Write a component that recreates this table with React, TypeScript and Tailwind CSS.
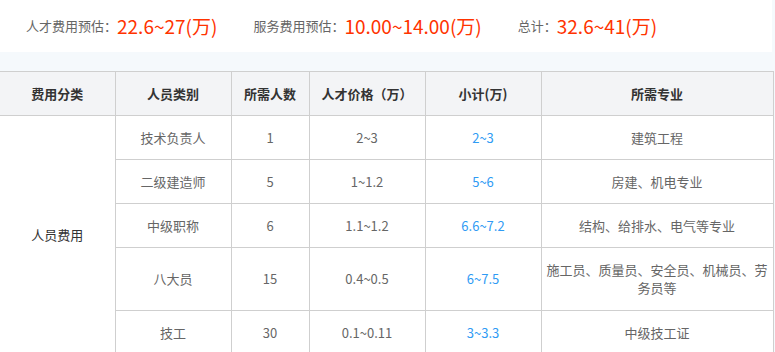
import React from "react";

const font = { fontFamily: '"Noto Sans CJK SC", "Noto Sans", sans-serif' };

type Row = { type: string; n: string; price: string; sub: string; major: string; tall?: boolean };

const rows: Row[] = [
  { type: "技术负责人", n: "1", price: "2~3", sub: "2~3", major: "建筑工程" },
  { type: "二级建造师", n: "5", price: "1~1.2", sub: "5~6", major: "房建、机电专业" },
  { type: "中级职称", n: "6", price: "1.1~1.2", sub: "6.6~7.2", major: "结构、给排水、电气等专业" },
  { type: "八大员", n: "15", price: "0.4~0.5", sub: "6~7.5", major: "施工员、质量员、安全员、机械员、劳务员等", tall: true },
  { type: "技工", n: "30", price: "0.1~0.11", sub: "3~3.3", major: "中级技工证" },
];

export default function App() {
  return (
    <div className="min-h-[352px] w-[775px] bg-[#f5f9fc] overflow-hidden" style={font}>
      <div className="flex h-[52px] w-[772px] items-center bg-white pl-[26px] text-[13px] text-[#666]">
        <div className="flex items-center">
          <span>人才费用预估：</span>
          <span className="text-[19px] text-[#ff3300]">22.6~27(万)</span>
        </div>
        <div className="ml-[36px] flex items-center">
          <span>服务费用预估：</span>
          <span className="text-[19px] text-[#ff3300]">10.00~14.00(万)</span>
        </div>
        <div className="ml-[36px] flex items-center">
          <span>总计：</span>
          <span className="text-[19px] text-[#ff3300]">32.6~41(万)</span>
        </div>
      </div>
      <div className="mt-[19px] w-[773px]">
        <table className="w-[773px] table-fixed border-collapse text-center text-[13px] leading-[18px]">
          <colgroup>
            <col className="w-[115px]" />
            <col className="w-[116px]" />
            <col className="w-[78px]" />
            <col className="w-[116px]" />
            <col className="w-[116px]" />
            <col className="w-[232px]" />
          </colgroup>
          <thead>
            <tr className="h-[44px] bg-[#f3f4f6] font-bold text-[#333]">
              <th className="border-y border-r border-[#cfcfcf] font-bold">费用分类</th>
              <th className="border border-[#cfcfcf] font-bold">人员类别</th>
              <th className="border border-[#cfcfcf] font-bold">所需人数</th>
              <th className="border border-[#cfcfcf] font-bold">人才价格（万）</th>
              <th className="border border-[#cfcfcf] font-bold">小计(万)</th>
              <th className="border border-[#cfcfcf] font-bold">所需专业</th>
            </tr>
          </thead>
          <tbody className="bg-white text-[#666]">
            {rows.map((r, i) => (
              <tr key={i} className={r.tall ? "h-[63px]" : "h-[44px]"}>
                {i === 0 && (
                  <td rowSpan={5} className="border-r border-b border-[#cfcfcf] text-[#333]">
                    人员费用
                  </td>
                )}
                <td className="border border-[#cfcfcf]">{r.type}</td>
                <td className="border border-[#cfcfcf]">{r.n}</td>
                <td className="border border-[#cfcfcf]">{r.price}</td>
                <td className="border border-[#cfcfcf] text-[#2f9bf4]">{r.sub}</td>
                <td className="border border-[#cfcfcf] px-[5px]">{r.major}</td>
              </tr>
            ))}
          </tbody>
        </table>
      </div>
    </div>
  );
}
